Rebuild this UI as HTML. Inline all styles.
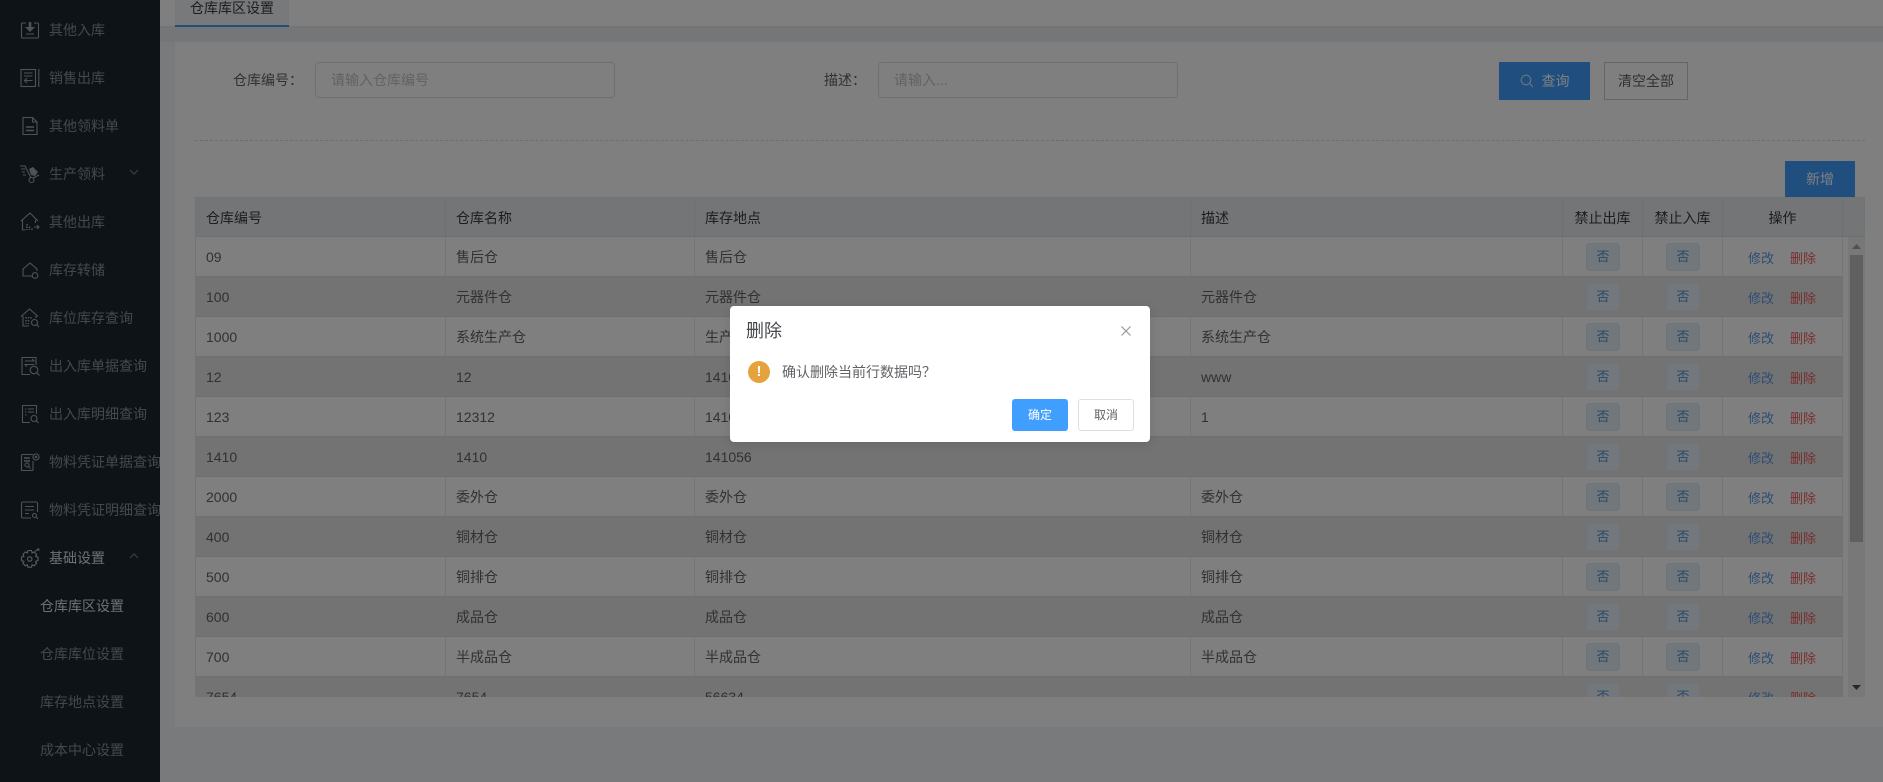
<!DOCTYPE html>
<html lang="zh-CN">
<head>
<meta charset="utf-8">
<title>仓库库区设置</title>
<style>
html,body{margin:0;padding:0;width:1883px;height:782px;overflow:hidden;background:#f3f5f8}
body,input,button{font-family:"Liberation Sans","Noto Sans CJK SC",sans-serif}
*{box-sizing:border-box}
.a{position:absolute}
#side{position:absolute;left:0;top:0;width:160px;height:782px;background:#1c272e;overflow:hidden}
.m{position:absolute;left:49px;font-size:14px;line-height:20px;height:20px;white-space:nowrap;color:#8b9197}
.s{left:40px}
.ic{position:absolute;left:20px;width:20px;height:20px;fill:none;stroke:#a0a6ab;stroke-width:1.1}
.ic .f{fill:#a0a6ab;stroke:none}
#head{position:absolute;left:160px;top:0;width:1723px;height:27px;background:#fff;border-bottom:1px solid #e2e6eb}
#tab{position:absolute;left:15px;top:0;width:114px;height:27px;background:#f0f3f6;border-bottom:2px solid #409eff;font-size:14px;line-height:16px;text-align:center;color:#3a3b3d}
#band{position:absolute;left:160px;top:27px;width:1723px;height:15px;background:#ebedf0}
#strip{position:absolute;left:160px;top:42px;width:15px;height:685px;background:#f3f5f8}
#card{position:absolute;left:175px;top:42px;width:1708px;height:685px;background:#fff}
.lb{position:absolute;font-size:14px;line-height:20px;color:#606266;white-space:nowrap}
.in{position:absolute;top:62px;height:36px;border:1px solid #dcdfe6;border-radius:4px;background:#fff;font-size:14px;line-height:34px;padding-left:15px;color:#c0c4cc;white-space:nowrap}
.bt{position:absolute;font-size:14px;text-align:center;white-space:nowrap}
#tb{position:absolute;left:195px;top:197px;width:1670px;height:500px;overflow:hidden}
.hd{position:absolute;left:0;top:0;width:1670px;height:40px;background:#e6eaee;border:1px solid #e2e6ea;border-bottom:1px solid #dde1e6}
.h,.c{position:absolute;top:0;height:100%;font-size:14px;white-space:nowrap}
.h{line-height:40px;color:#3a3b3d;border-right:1px solid #dde1e6;padding-left:10px}
.hc{text-align:center;padding-left:0}
.r{position:absolute;left:0;width:1648px;height:40px;background:#fff;border-bottom:1px solid #dcdfe4;border-left:1px solid #e6e9ee}
.r.e{background:#e6e6e6}
.c{line-height:40px;color:#606266;border-right:1px solid #e9ebef;padding-left:10px}
.r.e .c{border-right-color:#e6e6e6}
.c1{left:0;width:250px}.c2{left:250px;width:249px}.c3{left:499px;width:496px}.c4{left:995px;width:372px}
.c5{left:1367px;width:80px;padding:0}.c6{left:1447px;width:80px;padding:0}.c7{left:1527px;width:120px;padding:0;border-right:1px solid #e9ebef}
.n{position:absolute;left:23px;top:6px;width:34px;height:28px;border:1px solid #d9e7f5;border-radius:4px;background:#e5eef8;color:#4f8fd8;font-size:13px;line-height:25px;text-align:center}
.r.e .n{background:#e9f1fa;border-color:#dde8f3}
.l1,.l2{position:absolute;top:0;font-size:13px;line-height:43px}
.l1{left:25px;color:#5b9be6}.l2{left:67px;color:#f25a5a}
#sb{position:absolute;left:1653px;top:40px;width:17px;height:460px;background:#f0f0f0}
#th{position:absolute;left:2px;top:18px;width:13px;height:287px;background:#c1c1c1}
#mask{position:absolute;left:0;top:0;width:1883px;height:782px;background:rgba(0,0,0,.5)}
#dlg{position:absolute;left:730px;top:306px;width:420px;height:136px;background:#fff;border-radius:4px;box-shadow:0 2px 12px rgba(0,0,0,.1)}
#dt{position:absolute;left:16px;top:13px;font-size:18px;line-height:24px;color:#45474c}
#dm{position:absolute;left:52px;top:56px;font-size:14px;line-height:20px;color:#606266;white-space:nowrap}
#di{position:absolute;left:18px;top:55px;width:22px;height:22px;border-radius:50%;background:#e6a23c;color:#fff;text-align:center;font:bold 15px/22px "Liberation Sans",sans-serif}
#ok{position:absolute;left:282px;top:93px;width:56px;height:32px;background:#409eff;border-radius:3px;color:#fff;font-size:12px;line-height:33px;text-align:center}
#no{position:absolute;left:348px;top:93px;width:56px;height:32px;background:#fff;border:1px solid #dcdfe6;border-radius:3px;color:#606266;font-size:12px;line-height:31px;text-align:center}
</style>
</head>
<body>
<div id="side">
<svg class="ic" style="top:20px" viewBox="0 0 20 20"><path d="M6 3H2.500a1 1 0 0 0-1 1v13a1 1 0 0 0 1 1h15a1 1 0 0 0 1-1V4a1 1 0 0 0-1-1H14"/><path class="f" d="M8.700 2h2.600v5H15l-5 5-5-5h3.700zM6 13.500h8v1H6z"/></svg>
<svg class="ic" style="top:68px" viewBox="0 0 20 20"><rect x="1" y="1.500" width="14.500" height="17"/><path d="M18.800 1v18M4 5h8.500M4 8h8.500M12.500 12.500H4.500M7 10l-2.500 2.500L7 15"/></svg>
<svg class="ic" style="top:116px" viewBox="0 0 20 20"><path d="M3 1.500h9.500L17 6v12.500H3zM12.500 1.500V6H17"/><path stroke-width="1.500" d="M6 11h8M6 14.500h8"/></svg>
<svg class="ic" style="top:164px" viewBox="0 0 20 20"><path d="M0 2h5l6 12M1 5h4M2 8h3M3 11h3"/><path class="f" d="M9 5l4-2 5 5-3 4-4-1z"/><circle cx="11.500" cy="16" r="2.500"/><path d="M13 14l6-3"/></svg>
<svg class="ic" style="top:212px" viewBox="0 0 20 20"><path d="M1 9l9-8 8 8M2.500 8v10h3M15.500 8v3"/><path stroke-width="1.500" stroke-dasharray="1.500 1" d="M7 12v6M9.500 14.500v3.500M12 16.500v1.500"/><path d="M14 15h5M17 13l2 2-2 2"/></svg>
<svg class="ic" style="top:260px" viewBox="0 0 20 20"><path d="M12 16H3V9l7-6 7 6v2"/><circle cx="15" cy="15.500" r="2.800"/></svg>
<svg class="ic" style="top:308px" viewBox="0 0 20 20"><path d="M1 8.500l8.500-7.500L18 8.500M3 8v10h6M16 8v2"/><path stroke-width="1.500" stroke-dasharray="1.500 1.500" d="M6 9v7M8.500 9v7M11 9v2"/><circle cx="14.500" cy="14.500" r="3"/><path d="M16.700 16.700L19 19"/></svg>
<svg class="ic" style="top:356px" viewBox="0 0 20 20"><path d="M10 18.500H2V1.500h14V9"/><path d="M5 5h9l-2-2M14 8.500H5l2 2"/><circle cx="14" cy="14" r="3.800"/><path d="M16.800 16.800L19.500 19.500"/></svg>
<svg class="ic" style="top:404px" viewBox="0 0 20 20"><path d="M10 18.500H2.500V1.500h14V10"/><path stroke-dasharray="1.500 1" d="M5 5h1.500M5 8h1.500M5 11h1.500"/><path d="M8 5h6M8 8h6"/><circle cx="14" cy="14.500" r="3"/><path d="M16.200 16.800L18.500 19"/></svg>
<svg class="ic" style="top:452px" viewBox="0 0 20 20"><path d="M13 2.500H2.500a1 1 0 0 0-1 1V18.500h10.500a1 1 0 0 0 1-1V9"/><path stroke-width="1.500" d="M4 6h6M4 9h6"/><circle cx="7" cy="13" r="2"/><path d="M8.500 14.500l2 2"/><circle cx="16" cy="5" r="3"/><circle class="f" cx="16" cy="5" r="1.200"/></svg>
<svg class="ic" style="top:500px" viewBox="0 0 20 20"><path d="M11 18H3a1.500 1.500 0 0 1-1.500-1.500V3.500A1.500 1.500 0 0 1 3 2h13a1.500 1.500 0 0 1 1.500 1.500V12"/><path d="M5 6.500h9M5 10h9M5 13.500h4"/><circle cx="14.500" cy="15.500" r="2"/><path d="M16 17l2 2"/></svg>
<svg class="ic" style="top:548px;stroke:#b4babf" viewBox="0 0 20 20"><path d="M8 2.500h3.500l.6 2.400 2-1 2.500 2.500-1 2 2.400.7v3.500l-2.400.7 1 2-2.500 2.500-2-1-.6 2.400H8l-.6-2.400-2 1-2.500-2.500 1-2-2.400-.7V9.100l2.400-.7-1-2 2.500-2.500 2 1z"/><circle cx="9.750" cy="11" r="2.200"/><path d="M15 3.500l3-2.500"/><circle class="f" cx="18.300" cy="1.500" r="1.300"/></svg>
<div class="m" style="top:20px">其他入库</div>
<div class="m" style="top:68px">销售出库</div>
<div class="m" style="top:116px">其他领料单</div>
<div class="m" style="top:164px">生产领料</div>
<svg class="a" style="left:129px;top:168px" width="10" height="8" viewBox="0 0 10 8" fill="none" stroke="#7f868c"><path d="M1 2l4 4 4-4"/></svg>
<div class="m" style="top:212px">其他出库</div>
<div class="m" style="top:260px">库存转储</div>
<div class="m" style="top:308px">库位库存查询</div>
<div class="m" style="top:356px">出入库单据查询</div>
<div class="m" style="top:404px">出入库明细查询</div>
<div class="m" style="top:452px">物料凭证单据查询</div>
<div class="m" style="top:500px">物料凭证明细查询</div>
<div class="m" style="top:548px;color:#dde0e3">基础设置</div>
<svg class="a" style="left:129px;top:552px" width="10" height="8" viewBox="0 0 10 8" fill="none" stroke="#7f868c"><path d="M1 6l4-4 4 4"/></svg>
<div class="m s" style="top:596px;color:#dde0e3">仓库库区设置</div>
<div class="m s" style="top:644px">仓库库位设置</div>
<div class="m s" style="top:692px">库存地点设置</div>
<div class="m s" style="top:740px">成本中心设置</div>
</div>

<div id="head"><div id="tab">仓库库区设置</div></div>
<div id="band"></div>
<div id="strip"></div>
<div id="card"></div>

<div class="lb" style="left:233px;top:70px">仓库编号：</div>
<div class="in" style="left:315px;width:300px">请输入仓库编号</div>
<div class="lb" style="left:824px;top:70px">描述：</div>
<div class="in" style="left:878px;width:300px">请输入...</div>
<div class="bt" style="left:1499px;top:62px;width:91px;height:38px;background:#409eff;color:#fff;line-height:38px;padding-left:22px">查询</div>
<svg class="a" style="left:1520px;top:74px" width="14" height="14" viewBox="0 0 14 14" fill="none" stroke="#d5eaff" stroke-width="1.100"><circle cx="6" cy="6" r="4.800"/><path d="M9.500 9.500L13 13"/></svg>
<div class="bt" style="left:1604px;top:62px;width:84px;height:38px;border:1px solid #c8cacd;color:#606266;line-height:36px;background:#fff">清空全部</div>
<div class="a" style="left:195px;top:140px;width:1670px;border-top:1px dashed #d8dadd"></div>
<div class="bt" style="left:1785px;top:161px;width:70px;height:36px;background:#409eff;color:#fff;line-height:36px">新增</div>

<div id="tb">
<div class="hd">
<div class="h" style="left:0;width:250px">仓库编号</div>
<div class="h" style="left:250px;width:249px">仓库名称</div>
<div class="h" style="left:499px;width:496px">库存地点</div>
<div class="h" style="left:995px;width:372px">描述</div>
<div class="h hc" style="left:1367px;width:80px">禁止出库</div>
<div class="h hc" style="left:1447px;width:80px">禁止入库</div>
<div class="h hc" style="left:1527px;width:120px">操作</div>
</div>

<div class="r" style="top:40px"><div class="c c1">09</div><div class="c c2">售后仓</div><div class="c c3">售后仓</div><div class="c c4"></div><div class="c c5"><div class="n">否</div></div><div class="c c6"><div class="n">否</div></div><div class="c c7"><span class="l1">修改</span><span class="l2">删除</span></div></div>
<div class="r e" style="top:80px"><div class="c c1">100</div><div class="c c2">元器件仓</div><div class="c c3">元器件仓</div><div class="c c4">元器件仓</div><div class="c c5"><div class="n">否</div></div><div class="c c6"><div class="n">否</div></div><div class="c c7"><span class="l1">修改</span><span class="l2">删除</span></div></div>
<div class="r" style="top:120px"><div class="c c1">1000</div><div class="c c2">系统生产仓</div><div class="c c3">生产仓</div><div class="c c4">系统生产仓</div><div class="c c5"><div class="n">否</div></div><div class="c c6"><div class="n">否</div></div><div class="c c7"><span class="l1">修改</span><span class="l2">删除</span></div></div>
<div class="r e" style="top:160px"><div class="c c1">12</div><div class="c c2">12</div><div class="c c3">141056</div><div class="c c4">www</div><div class="c c5"><div class="n">否</div></div><div class="c c6"><div class="n">否</div></div><div class="c c7"><span class="l1">修改</span><span class="l2">删除</span></div></div>
<div class="r" style="top:200px"><div class="c c1">123</div><div class="c c2">12312</div><div class="c c3">141056</div><div class="c c4">1</div><div class="c c5"><div class="n">否</div></div><div class="c c6"><div class="n">否</div></div><div class="c c7"><span class="l1">修改</span><span class="l2">删除</span></div></div>
<div class="r e" style="top:240px"><div class="c c1">1410</div><div class="c c2">1410</div><div class="c c3">141056</div><div class="c c4"></div><div class="c c5"><div class="n">否</div></div><div class="c c6"><div class="n">否</div></div><div class="c c7"><span class="l1">修改</span><span class="l2">删除</span></div></div>
<div class="r" style="top:280px"><div class="c c1">2000</div><div class="c c2">委外仓</div><div class="c c3">委外仓</div><div class="c c4">委外仓</div><div class="c c5"><div class="n">否</div></div><div class="c c6"><div class="n">否</div></div><div class="c c7"><span class="l1">修改</span><span class="l2">删除</span></div></div>
<div class="r e" style="top:320px"><div class="c c1">400</div><div class="c c2">铜材仓</div><div class="c c3">铜材仓</div><div class="c c4">铜材仓</div><div class="c c5"><div class="n">否</div></div><div class="c c6"><div class="n">否</div></div><div class="c c7"><span class="l1">修改</span><span class="l2">删除</span></div></div>
<div class="r" style="top:360px"><div class="c c1">500</div><div class="c c2">铜排仓</div><div class="c c3">铜排仓</div><div class="c c4">铜排仓</div><div class="c c5"><div class="n">否</div></div><div class="c c6"><div class="n">否</div></div><div class="c c7"><span class="l1">修改</span><span class="l2">删除</span></div></div>
<div class="r e" style="top:400px"><div class="c c1">600</div><div class="c c2">成品仓</div><div class="c c3">成品仓</div><div class="c c4">成品仓</div><div class="c c5"><div class="n">否</div></div><div class="c c6"><div class="n">否</div></div><div class="c c7"><span class="l1">修改</span><span class="l2">删除</span></div></div>
<div class="r" style="top:440px"><div class="c c1">700</div><div class="c c2">半成品仓</div><div class="c c3">半成品仓</div><div class="c c4">半成品仓</div><div class="c c5"><div class="n">否</div></div><div class="c c6"><div class="n">否</div></div><div class="c c7"><span class="l1">修改</span><span class="l2">删除</span></div></div>
<div class="r e" style="top:480px"><div class="c c1">7654</div><div class="c c2">7654</div><div class="c c3">56634</div><div class="c c4"></div><div class="c c5"><div class="n">否</div></div><div class="c c6"><div class="n">否</div></div><div class="c c7"><span class="l1">修改</span><span class="l2">删除</span></div></div>

<div id="sb">
<svg class="a" style="left:4px;top:7px" width="9" height="5"><path d="M0 5L4.500 0 9 5z" fill="#a3a3a3"/></svg>
<div id="th"></div>
<svg class="a" style="left:4px;top:448px" width="9" height="5"><path d="M0 0L4.500 5 9 0z" fill="#505050"/></svg>
</div>
</div>

<div id="mask"></div>

<div id="dlg">
<div id="dt">删除</div>
<svg class="a" style="left:391px;top:20px" width="10" height="10" viewBox="0 0 10 10" fill="none" stroke="#909399" stroke-width="1.100"><path d="M.5.500l9 9M9.500.500l-9 9"/></svg>
<div id="di">!</div>
<div id="dm">确认删除当前行数据吗？</div>
<div id="ok">确定</div>
<div id="no">取消</div>
</div>
</body>
</html>
